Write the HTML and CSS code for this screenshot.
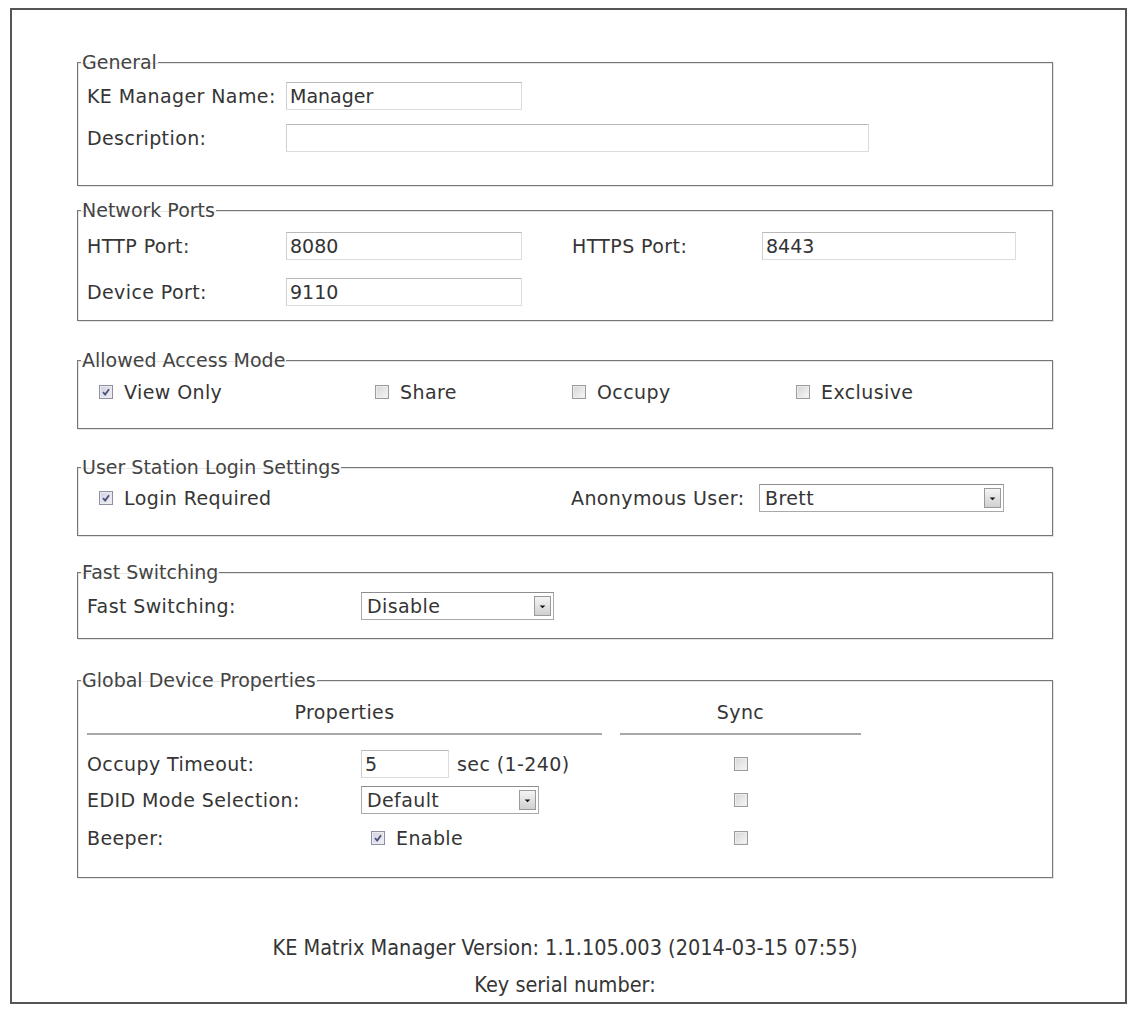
FILE: index.html
```html
<!DOCTYPE html>
<html lang="en">
<head>
    <meta charset="UTF-8">
    <meta name="viewport" content="width=device-width, initial-scale=1.0">
    <title>KE Matrix Manager - Settings</title>
    <link rel="stylesheet" href="styles.css">
</head>
<body>
    <div class="panel">

        <fieldset class="group general">
            <legend>General</legend>
            <div class="row">
                <label class="lbl" for="mgrName">KE Manager Name:</label>
                <input class="text w-port" id="mgrName" type="text" value="Manager">
            </div>
            <div class="row">
                <label class="lbl" for="mgrDesc">Description:</label>
                <input class="text w-desc" id="mgrDesc" type="text" value="">
            </div>
        </fieldset>

        <fieldset class="group ports">
            <legend>Network Ports</legend>
            <div class="row">
                <label class="lbl" for="httpPort">HTTP Port:</label>
                <input class="text w-port" id="httpPort" type="text" value="8080">
                <label class="lbl second" for="httpsPort">HTTPS Port:</label>
                <input class="text w-port2" id="httpsPort" type="text" value="8443">
            </div>
            <div class="row">
                <label class="lbl" for="devPort">Device Port:</label>
                <input class="text w-port" id="devPort" type="text" value="9110">
            </div>
        </fieldset>

        <fieldset class="group access">
            <legend>Allowed Access Mode</legend>
            <div class="row modes">
                <span class="opt"><span class="check on"><svg viewBox="0 0 10 10"><path d="M2 5.2 L4.2 7.6 L8 2.2"/></svg></span>View Only</span>
                <span class="opt"><span class="check"></span>Share</span>
                <span class="opt"><span class="check"></span>Occupy</span>
                <span class="opt"><span class="check"></span>Exclusive</span>
            </div>
        </fieldset>

        <fieldset class="group login">
            <legend>User Station Login Settings</legend>
            <div class="row login-row">
                <span class="opt"><span class="check on"><svg viewBox="0 0 10 10"><path d="M2 5.2 L4.2 7.6 L8 2.2"/></svg></span>Login Required</span>
                <span class="lbl">Anonymous User:</span>
                <div class="combo w-user"><span class="combo-val">Brett</span><span class="combo-btn"><svg viewBox="0 0 8 8"><path d="M1.5 3 L6.5 3 L4 5.5 Z"/></svg></span></div>
            </div>
        </fieldset>

        <fieldset class="group fast">
            <legend>Fast Switching</legend>
            <div class="row">
                <span class="lbl wide">Fast Switching:</span>
                <div class="combo w-fast"><span class="combo-val">Disable</span><span class="combo-btn"><svg viewBox="0 0 8 8"><path d="M1.5 3 L6.5 3 L4 5.5 Z"/></svg></span></div>
            </div>
        </fieldset>

        <fieldset class="group global">
            <legend>Global Device Properties</legend>
            <div class="prop-head">
                <span>Properties</span>
                <span>Sync</span>
            </div>
            <div class="prop-row">
                <label class="lbl" for="occTimeout">Occupy Timeout:</label>
                <span class="ctl"><input class="text w-sec" id="occTimeout" type="text" value="5"><span class="unit">sec (1-240)</span></span>
                <span class="sync"><span class="check"></span></span>
            </div>
            <div class="prop-row">
                <span class="lbl">EDID Mode Selection:</span>
                <span class="ctl"><div class="combo w-edid"><span class="combo-val">Default</span><span class="combo-btn"><svg viewBox="0 0 8 8"><path d="M1.5 3 L6.5 3 L4 5.5 Z"/></svg></span></div></span>
                <span class="sync"><span class="check"></span></span>
            </div>
            <div class="prop-row">
                <span class="lbl">Beeper:</span>
                <span class="ctl"><span class="opt beep"><span class="check on"><svg viewBox="0 0 10 10"><path d="M2 5.2 L4.2 7.6 L8 2.2"/></svg></span>Enable</span></span>
                <span class="sync"><span class="check"></span></span>
            </div>
        </fieldset>

        <div class="about">
            <p>KE Matrix Manager Version: 1.1.105.003 (2014-03-15 07:55)</p>
            <p>Key serial number:</p>
        </div>
    </div>
</body>
</html>
```

FILE: styles.css
```css
body {
    margin: 0;
    font-family: "DejaVu Sans", Verdana, sans-serif;
    font-size: 19px;
    letter-spacing: 0.4px;
    color: #353535;
    background: #fff;
}

/* outer frame round the whole settings page */
.panel {
    margin: 8px 5px 0 10px;
    height: 996px;
    box-sizing: border-box;
    border: 2px solid #555;
    padding: 41px 72px 0 65px;
}

.group {
    margin: 0 0 27px;
    padding: 8px 10px 18px 9px;
    border: 1px solid #767676;
    box-shadow: inset 1px 1px 0 #e4e4e4, 1px 1px 0 #e4e4e4;
}

legend {
    margin-left: -6px;
    padding: 0 1px;
    line-height: 22px;
    color: #444;
    letter-spacing: 0;
}

/* spacing of each group box */
.general { padding-top: 7px; padding-bottom: 31px; margin-bottom: 13px; }
.ports { padding-top: 9px; padding-bottom: 12px; margin-bottom: 28px; }
.ports .row + .row { margin-top: 14px; }
.access { padding-top: 5px; padding-bottom: 20px; }
.login { padding-top: 4px; padding-bottom: 21px; margin-bottom: 25px; }
.fast { padding-top: 7px; padding-bottom: 16px; margin-bottom: 30px; }
.global { padding-top: 10px; padding-bottom: 24px; }

.row {
    display: flex;
    align-items: center;
    height: 32px;
}

.row + .row {
    margin-top: 10px;
}

.lbl {
    flex: none;
    width: 199px;
}

.lbl.wide {
    width: 274px;
}

.lbl.second {
    width: 190px;
    margin-left: 50px;
}

/* text boxes */
.text {
    font: inherit;
    color: #333;
    height: 28px;
    box-sizing: border-box;
    margin: 0;
    padding: 0 3px;
    border: 1px solid #dcdcdc;
    border-top-color: #b9b9b9;
    border-left-color: #cfcfcf;
    outline: none;
}

.w-port { width: 236px; }
.w-port2 { width: 254px; }
.w-desc { width: 583px; }
.w-sec { width: 88px; }

/* drop-down boxes */
.combo {
    display: flex;
    align-items: center;
    height: 28px;
    box-sizing: border-box;
    border: 1px solid #a9a9a9;
    border-top-color: #8e8e8e;
    padding: 0 2px 0 5px;
    background: #fff;
}

.combo-val {
    flex: 1;
}

.combo-btn {
    width: 17px;
    height: 20px;
    box-sizing: border-box;
    border: 1px solid #9a9a9a;
    background: linear-gradient(#f4f4f4, #d0d0d0);
    display: flex;
    align-items: center;
    justify-content: center;
}

.combo-btn svg {
    width: 9px;
    height: 9px;
    fill: #111;
}

.w-user { width: 245px; }
.w-fast { width: 193px; }
.w-edid { width: 178px; }

/* check boxes */
.opt {
    display: flex;
    align-items: center;
}

.check {
    flex: none;
    width: 14px;
    height: 14px;
    box-sizing: border-box;
    border: 1px solid #9c9c9c;
    background: linear-gradient(135deg, #d6d6d6, #f6f6f6);
    box-shadow: inset 0 0 0 1px #ececec;
    display: inline-flex;
    align-items: center;
    justify-content: center;
    margin-right: 11px;
}

.check.on {
    border-color: #8f8fa6;
    background: linear-gradient(135deg, #cfcfe2, #f1f1f8);
}

.check svg {
    width: 10px;
    height: 10px;
    fill: none;
    stroke: #4a5276;
    stroke-width: 1.8;
}

.modes {
    display: grid;
    grid-template-columns: 276px 197px 224px auto;
    padding-left: 12px;
}

.login-row {
    display: grid;
    grid-template-columns: 472px 188px 245px;
    padding-left: 12px;
}

.login-row .lbl {
    width: auto;
}

/* global properties table */
.prop-head {
    display: grid;
    grid-template-columns: 515px 241px;
    column-gap: 18px;
}

.prop-head span {
    text-align: center;
    line-height: 22px;
    padding-bottom: 10px;
    border-bottom: 2px solid #a8a8a8;
}

.prop-row {
    display: grid;
    grid-template-columns: 274px 259px 241px;
    align-items: center;
    height: 30px;
    margin-top: 6px;
}

.prop-head + .prop-row {
    margin-top: 14px;
}

.prop-row:last-child {
    margin-top: 8px;
}

.prop-row .lbl {
    width: auto;
}

.ctl {
    display: flex;
    align-items: center;
}

.unit {
    margin-left: 8px;
}

.beep {
    margin-left: 10px;
}

.sync {
    display: flex;
    justify-content: center;
}

.sync .check {
    margin-right: 0;
}

/* version lines under the groups */
.about {
    margin-top: 58px;
    text-align: center;
    font-family: "DejaVu Sans Condensed", Tahoma, sans-serif;
    font-size: 21.5px;
    letter-spacing: 0;
}

.about p {
    margin: 0 0 14px;
    line-height: 23px;
}
```
